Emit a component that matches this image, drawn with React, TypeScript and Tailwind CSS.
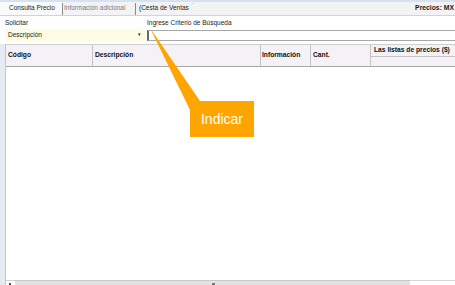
import React from "react";

export default function App() {
  const font = { fontFamily: '"Liberation Sans", Arial, sans-serif' };
  return (
    <div
      className="relative w-[455px] h-[285px] overflow-hidden bg-white text-[#1a1a1a] flex flex-col"
      style={font}
    >
      {/* top blue line */}
      <div className="h-[2px] bg-[#d6e2f2] shrink-0" />
      {/* tab strip */}
      <div className="h-[14px] shrink-0 flex items-center bg-[#f3f3f3] border-b border-[#d4d4d4] text-[6.5px] leading-none">
        <div className="h-full flex items-center pl-[9px] w-[62px] bg-[#fafafa]">Consulta Precio</div>
        <div className="w-px h-[12px] bg-[#8a8a8a]" />
        <div className="h-full flex items-center pl-[1px] w-[72px] text-[#7a7a7a]">Información adicional</div>
        <div className="w-px h-[12px] bg-[#8a8a8a]" />
        <div className="h-full flex items-center pl-[3px]">(Cesta de Ventas</div>
        <div className="ml-[3px] self-start mt-[1px] text-[5px] text-[#888]">'</div>
        <div className="ml-auto font-bold text-[6.8px] whitespace-nowrap pr-[1px]">Precios: MX</div>
      </div>
      {/* form */}
      <div className="shrink-0 bg-white pt-[3px]">
        <div className="flex text-[6.5px] leading-[8px] h-[9px]">
          <div className="w-[147px] pl-[5px]">Solicitar</div>
          <div>Ingrese Criterio de Búsqueda</div>
        </div>
        <div className="flex items-center mt-[1px] h-[12px]">
          <div className="ml-[5px] w-[140px] h-[12px] bg-[#fdfbe3] flex items-center text-[6.5px] pl-[3px] relative">
            <span>Descripción</span>
            <span className="absolute right-[4px] top-[3px] text-[5px] leading-none">▾</span>
          </div>
          <div className="ml-[2px] flex-1 h-[11px] border-t border-b border-l-2 border-[#a8a8a8] border-l-[#6a6a6a] bg-white" />
        </div>
      </div>
      {/* table */}
      <div className="flex flex-1 mt-[3px] min-h-0">
        <div className="w-[6px] bg-[#e6eaf3] border-r border-[#c3c7d0] shrink-0" />
        <div className="flex-1 flex flex-col min-w-0">
          <div className="h-[23px] shrink-0 flex bg-[#f4f2f6] border-t border-[#cfcfcf] border-b border-b-[#a9a9a9] text-[6.7px] font-bold text-[#111] leading-none">
            <div className="w-[87px] border-r border-[#c4c4c4] flex items-center pl-[2px]">Código</div>
            <div className="w-[168px] border-r border-[#c4c4c4] flex items-center pl-[2px]">Descripción</div>
            <div className="w-[50px] border-r border-[#c4c4c4] flex items-center pl-[1px]">Información</div>
            <div className="w-[60px] border-r border-[#c4c4c4] flex items-center pl-[2px]">Cant.</div>
            <div className="flex-1 flex flex-col">
              <div className="h-[12px] border-b border-[#c4c4c4] flex items-center pl-[3px] whitespace-nowrap">Las listas de precios ($)</div>
              <div className="flex-1" />
            </div>
          </div>
          <div className="flex-1 bg-white" />
        </div>
      </div>
      {/* bottom scrollbar */}
      <div className="h-[5px] shrink-0 flex">
        <div className="w-[6px] bg-[#e6eaf3] border-r border-[#c3c7d0]" />
        <div className="w-[9px] bg-white border-t border-[#d0d0d0] relative">
          <div className="absolute left-[3px] top-[2px] w-[2px] h-[2px] bg-[#555]" />
        </div>
        <div className="w-[395px] bg-[#e2e2e2] border-t border-[#c8c8c8] relative">
          <div className="absolute left-[197px] top-[2px] w-[3px] h-[3px] bg-[#777]" />
        </div>
        <div className="flex-1 border-t border-[#d8d8d8] bg-white" />
      </div>

      {/* callout */}
      <svg className="absolute left-0 top-0 pointer-events-none" width="455" height="285">
        <polygon points="150,28 200,101 190,101 190,110" fill="#FFA500" />
      </svg>
      <div className="absolute left-[190px] top-[101px] w-[64px] h-[36px] bg-[#FFA500] flex items-center justify-center text-white text-[14px] leading-none">
        Indicar
      </div>
    </div>
  );
}
